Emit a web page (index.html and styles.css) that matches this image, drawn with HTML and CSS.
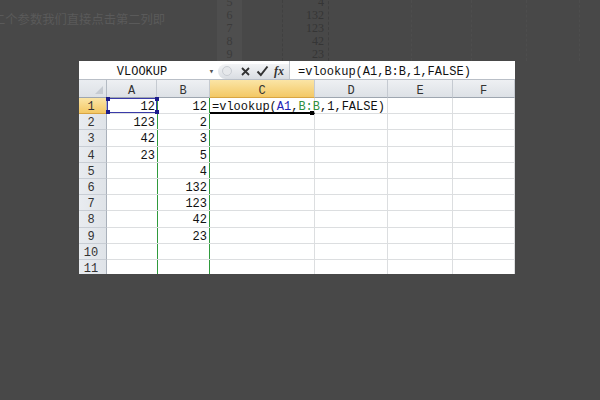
FILE: index.html
```html
<!DOCTYPE html>
<html lang="zh">
<head>
    <meta charset="UTF-8">
    <meta name="viewport" content="width=device-width, initial-scale=1.0">
    <title>vlookup</title>
    <link rel="stylesheet" href="styles.css">
</head>
<body>
    <!-- faded part of the previous screenshot -->
    <div class="ghost">
        <div class="ghost-text">二个参数我们直接点击第二列即</div>
        <div class="ghost-rows">
            <span>5</span><span>6</span><span>7</span><span>8</span><span>9</span>
        </div>
        <div class="ghost-col w41"></div>
        <div class="ghost-nums">
            <span>4</span><span>132</span><span>123</span><span>42</span><span>23</span>
        </div>
        <div class="ghost-col w83"></div>
        <div class="ghost-col w60"></div>
        <div class="ghost-col w55"></div>
        <div class="ghost-col w53"></div>
    </div>

    <div class="sheet">
        <div class="formulabar">
            <div class="namebox">VLOOKUP</div>
            <div class="namearrow">▾</div>
            <div class="fxbox">
                <span class="dot"></span>
                <svg class="icon" width="11" height="11" viewBox="0 0 11 11">
                    <path d="M2 2 L9 9 M9 2 L2 9" stroke="#333" stroke-width="1.8" fill="none"/>
                </svg>
                <svg class="icon" width="13" height="12" viewBox="0 0 13 12">
                    <path d="M1.5 6.5 L4.8 10 L11.5 1.5" stroke="#333" stroke-width="2" fill="none"/>
                </svg>
                <span class="fx">fx</span>
            </div>
            <div class="formula">=vlookup(A1,B:B,1,FALSE)</div>
        </div>

        <div class="grid">
            <div class="corner"><span class="tri"></span></div>
            <div class="colhead">A</div>
            <div class="colhead">B</div>
            <div class="colhead active">C</div>
            <div class="colhead">D</div>
            <div class="colhead">E</div>
            <div class="colhead">F</div>

            <div class="rowhead active">1</div>
            <div class="cell cola sel">12<i class="h tl"></i><i class="h tr"></i><i class="h bl"></i><i class="h br"></i></div>
            <div class="cell colb">12</div>
            <div class="cell cur">=vlookup(<span class="ref1">A1</span>,<span class="ref2">B:B</span>,1,FALSE)<i class="fill"></i></div>
            <div class="cell"></div><div class="cell"></div><div class="cell"></div>

            <div class="rowhead">2</div>
            <div class="cell cola">123</div><div class="cell colb">2</div>
            <div class="cell"></div><div class="cell"></div><div class="cell"></div><div class="cell"></div>

            <div class="rowhead">3</div>
            <div class="cell cola">42</div><div class="cell colb">3</div>
            <div class="cell"></div><div class="cell"></div><div class="cell"></div><div class="cell"></div>

            <div class="rowhead">4</div>
            <div class="cell cola">23</div><div class="cell colb">5</div>
            <div class="cell"></div><div class="cell"></div><div class="cell"></div><div class="cell"></div>

            <div class="rowhead">5</div>
            <div class="cell cola"></div><div class="cell colb">4</div>
            <div class="cell"></div><div class="cell"></div><div class="cell"></div><div class="cell"></div>

            <div class="rowhead">6</div>
            <div class="cell cola"></div><div class="cell colb">132</div>
            <div class="cell"></div><div class="cell"></div><div class="cell"></div><div class="cell"></div>

            <div class="rowhead">7</div>
            <div class="cell cola"></div><div class="cell colb">123</div>
            <div class="cell"></div><div class="cell"></div><div class="cell"></div><div class="cell"></div>

            <div class="rowhead">8</div>
            <div class="cell cola"></div><div class="cell colb">42</div>
            <div class="cell"></div><div class="cell"></div><div class="cell"></div><div class="cell"></div>

            <div class="rowhead">9</div>
            <div class="cell cola"></div><div class="cell colb">23</div>
            <div class="cell"></div><div class="cell"></div><div class="cell"></div><div class="cell"></div>

            <div class="rowhead">10</div>
            <div class="cell cola"></div><div class="cell colb"></div>
            <div class="cell"></div><div class="cell"></div><div class="cell"></div><div class="cell"></div>

            <div class="rowhead">11</div>
            <div class="cell cola"></div><div class="cell colb"></div>
            <div class="cell"></div><div class="cell"></div><div class="cell"></div><div class="cell"></div>
        </div>
    </div>
</body>
</html>
```

FILE: styles.css
```css
body{
    margin: 0;
    height: 400px;
    background-color: #484848;
    font-family: "Liberation Mono", "DejaVu Sans Mono", monospace;
    overflow: hidden;
}

/* faded screenshot at the top */
.ghost{
    display: flex;
    height: 61px;
    overflow: hidden;
}
.ghost-text{
    width: 224px;
    margin-left: -7px;
    padding-top: 10px;
    box-sizing: border-box;
    font-family: "Noto Sans CJK SC", sans-serif;
    font-size: 12.3px;
    color: #5a5a5a;
    white-space: nowrap;
}
.ghost-rows{
    width: 25px;
    background-color: #4e4e4e;
    display: flex;
    flex-direction: column;
    align-items: center;
    margin-top: -4px;
    font-family: "Liberation Serif", serif;
    font-size: 12px;
    line-height: 13px;
    color: #3b3b3b;
}
.ghost-nums{
    width: 46px;
    display: flex;
    flex-direction: column;
    align-items: flex-end;
    padding-right: 4px;
    box-sizing: border-box;
    margin-top: -4px;
    border-right: 1px dashed #3e3e3e;
    font-family: "Liberation Serif", serif;
    font-size: 12px;
    line-height: 13px;
    color: #353535;
}
.ghost-col{
    border-right: 1px dashed #404040;
    box-sizing: border-box;
}
.w41{ width: 41px; }
.w83{ width: 83px; border-right-color: #4d4d4d; }
.w60{ width: 60px; border-right-color: #4d4d4d; }
.w55{ width: 55px; border-right-color: #4d4d4d; }
.w53{ width: 53px; border-right-color: #4d4d4d; }

/* spreadsheet */
.sheet{
    width: 436px;
    height: 213px;
    margin-left: 79px;
    background-color: #ffffff;
    overflow: hidden;
}
.formulabar{
    display: flex;
    align-items: center;
    height: 19px;
    box-sizing: border-box;
    border-bottom: 1px solid #b9bfc7;
    font-size: 12px;
    color: #111;
}
.namebox{
    width: 126px;
    padding-top: 4px;
    text-align: center;
}
.namearrow{
    width: 13px;
    padding-top: 2px;
    font-size: 9px;
    color: #555;
    text-align: center;
}
.fxbox{
    width: 71px;
    height: 15px;
    margin-top: 2px;
    display: flex;
    align-items: center;
    gap: 5px;
    padding-left: 4px;
    box-sizing: border-box;
    border-radius: 8px 0 0 8px;
    background: linear-gradient(#f3f4f6, #d9dde2);
}
.dot{
    width: 8px;
    height: 8px;
    border-radius: 50%;
    background-color: #e6e8eb;
    border: 1px solid #c9cdd3;
    margin-right: 3px;
}
.fx{
    font-family: "Liberation Serif", serif;
    font-style: italic;
    font-weight: bold;
    font-size: 12px;
    color: #333;
}
.formula{
    flex: 1;
    height: 18px;
    line-height: 16px;
    padding-top: 3px;
    box-sizing: border-box;
    padding-left: 8px;
    border-left: 1px solid #c2c7ce;
}

.grid{
    display: grid;
    grid-template-columns: 28px 50px 53px 105px 73px 65px 62px;
    grid-template-rows: 18px repeat(11, 16.2px);
    font-size: 12px;
    color: #111;
}
.corner{
    position: relative;
    background: linear-gradient(#eaedf1, #dde1e6);
    border-right: 1px solid #b3bac3;
    border-bottom: 1px solid #9ea6b0;
}
.tri{
    position: absolute;
    right: 3px;
    bottom: 3px;
    border-left: 8px solid transparent;
    border-bottom: 8px solid #c6cbd2;
}
.colhead{
    display: flex;
    align-items: center;
    justify-content: center;
    padding-top: 5px;
    background: linear-gradient(#eef0f3, #dde1e6);
    border-right: 1px solid #c5cad1;
    border-bottom: 1px solid #9ea6b0;
    color: #333;
}
.rowhead{
    display: flex;
    align-items: center;
    justify-content: center;
    padding-right: 3px;
    padding-top: 3px;
    background: linear-gradient(90deg, #e9ecf0, #dfe3e8);
    border-right: 1px solid #a9b0ba;
    border-bottom: 1px solid #c8cdd4;
    color: #333;
}
.colhead.active, .rowhead.active{
    background: linear-gradient(#fbe5a6, #f3c865);
    border-bottom-color: #d8a543;
}
.cell{
    display: flex;
    align-items: center;
    padding-top: 3px;
    border-right: 1px solid #dcdee0;
    border-bottom: 1px solid #dcdee0;
    white-space: nowrap;
}
.cola{
    justify-content: flex-end;
    padding-right: 2px;
    border-right: none;
}
.colb{
    justify-content: flex-end;
    border-right: none;
    padding-right: 3px;
    box-shadow: inset 1px 0 0 #2f9a3c, inset -1px 0 0 #2f9a3c;
}
.sel{
    position: relative;
    box-shadow: inset 0 0 0 1px #3a3aa8;
}
.h{
    position: absolute;
    width: 4px;
    height: 4px;
    background-color: #1c1c8c;
}
.tl{ left: -1px; top: -1px; }
.tr{ right: -2px; top: -1px; }
.bl{ left: -1px; bottom: -1px; }
.br{ right: -2px; bottom: -1px; }
.cur{
    position: relative;
    padding-left: 2px;
    border-bottom: 2px solid #000;
    overflow: visible;
}
.fill{
    position: absolute;
    right: 0;
    bottom: -3px;
    width: 4px;
    height: 4px;
    background-color: #000;
}
.ref1{ color: #2323b5; }
.ref2{ color: #2f8f3e; }
```
